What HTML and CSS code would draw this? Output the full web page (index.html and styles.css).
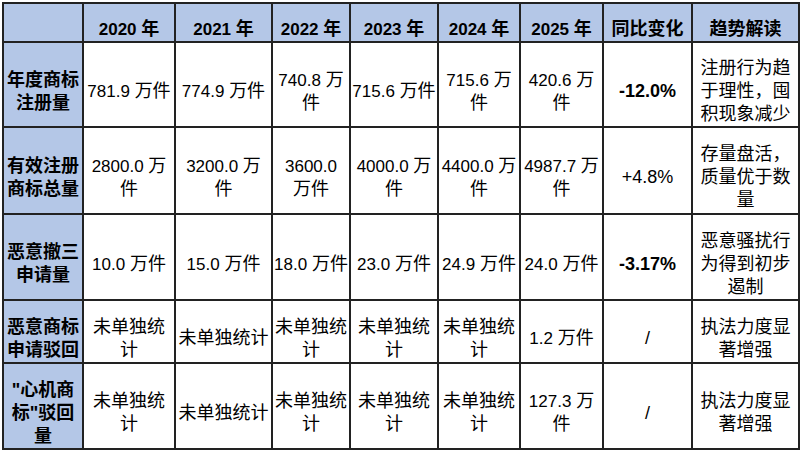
FILE: index.html
```html
<!DOCTYPE html>
<html lang="zh">
<head>
<meta charset="utf-8">
<link rel="stylesheet" href="styles.css">
</head>
<body>
<table class="tbl">
  <colgroup>
    <col class="c0"><col class="c1"><col class="c2"><col class="c3"><col class="c4"><col class="c5"><col class="c6"><col class="c7"><col class="c8">
  </colgroup>
  <tr class="r-head">
    <th class="hd"></th>
    <th class="hd"><span class="n">2020 </span>年</th>
    <th class="hd"><span class="n">2021 </span>年</th>
    <th class="hd"><span class="n">2022 </span>年</th>
    <th class="hd"><span class="n">2023 </span>年</th>
    <th class="hd"><span class="n">2024 </span>年</th>
    <th class="hd"><span class="n">2025 </span>年</th>
    <th class="hd">同比变化</th>
    <th class="hd">趋势解读</th>
  </tr>
  <tr class="r1">
    <th class="lab">年度商标<br>注册量</th>
    <td><span class="n">781.9 </span>万件</td>
    <td><span class="n">774.9 </span>万件</td>
    <td><span class="n">740.8 </span>万<br>件</td>
    <td><span class="n">715.6 </span>万件</td>
    <td><span class="n">715.6 </span>万<br>件</td>
    <td><span class="n">420.6 </span>万<br>件</td>
    <td class="b">-12.0%</td>
    <td>注册行为趋<br>于理性，囤<br>积现象减少</td>
  </tr>
  <tr class="r2">
    <th class="lab">有效注册<br>商标总量</th>
    <td><span class="n">2800.0 </span>万<br>件</td>
    <td><span class="n">3200.0 </span>万<br>件</td>
    <td><span class="n">3600.0</span><br>万件</td>
    <td><span class="n">4000.0 </span>万<br>件</td>
    <td><span class="n">4400.0 </span>万<br>件</td>
    <td><span class="n">4987.7 </span>万<br>件</td>
    <td>+4.8%</td>
    <td>存量盘活，<br>质量优于数<br>量</td>
  </tr>
  <tr class="r3">
    <th class="lab">恶意撤三<br>申请量</th>
    <td><span class="n">10.0 </span>万件</td>
    <td><span class="n">15.0 </span>万件</td>
    <td><span class="n">18.0 </span>万件</td>
    <td><span class="n">23.0 </span>万件</td>
    <td><span class="n">24.9 </span>万件</td>
    <td><span class="n">24.0 </span>万件</td>
    <td class="b">-3.17%</td>
    <td>恶意骚扰行<br>为得到初步<br>遏制</td>
  </tr>
  <tr class="r4">
    <th class="lab">恶意商标<br>申请驳回</th>
    <td>未单独统<br>计</td>
    <td>未单独统计</td>
    <td>未单独统<br>计</td>
    <td>未单独统<br>计</td>
    <td>未单独统<br>计</td>
    <td><span class="n">1.2 </span>万件</td>
    <td>/</td>
    <td>执法力度显<br>著增强</td>
  </tr>
  <tr class="r5">
    <th class="lab">"心机商<br>标"驳回<br>量</th>
    <td>未单独统<br>计</td>
    <td>未单独统计</td>
    <td>未单独统<br>计</td>
    <td>未单独统<br>计</td>
    <td>未单独统<br>计</td>
    <td><span class="n">127.3 </span>万<br>件</td>
    <td>/</td>
    <td>执法力度显<br>著增强</td>
  </tr>
</table>
</body>
</html>
```
FILE: styles.css
```css
html, body {
  margin: 0;
  padding: 0;
  background: #ffffff;
}
body {
  padding: 2px 0 0 2px;
  font-family: "Liberation Sans", "Noto Sans CJK SC", sans-serif;
  font-size: 18px;
  color: #000;
}
.tbl {
  border-collapse: collapse;
  table-layout: fixed;
  width: 796px;
}
.c0 { width: 80px; }
.c1 { width: 92px; }
.c2 { width: 97px; }
.c3 { width: 78px; }
.c4 { width: 88px; }
.c5 { width: 82px; }
.c6 { width: 83px; }
.c7 { width: 89px; }
.c8 { width: 107px; }
.tbl th, .tbl td {
  border: 2px solid #222;
  padding: 14px 0 0 0;
  text-align: center;
  vertical-align: middle;
  line-height: 23px;
  white-space: nowrap;
}
.n { font-size: 17px; }
.hd {
  background: #b4c7e7;
  font-weight: bold;
}
.lab {
  background: #b4c7e7;
  font-weight: bold;
}
.b { font-weight: bold; }
.r-head > * { height: 23px; }
.r1 > * { height: 69px; }
.r2 > * { height: 71px; }
.r3 > * { height: 70px; }
.r4 > * { height: 47px; }
.r5 > * { height: 70px; }
```
